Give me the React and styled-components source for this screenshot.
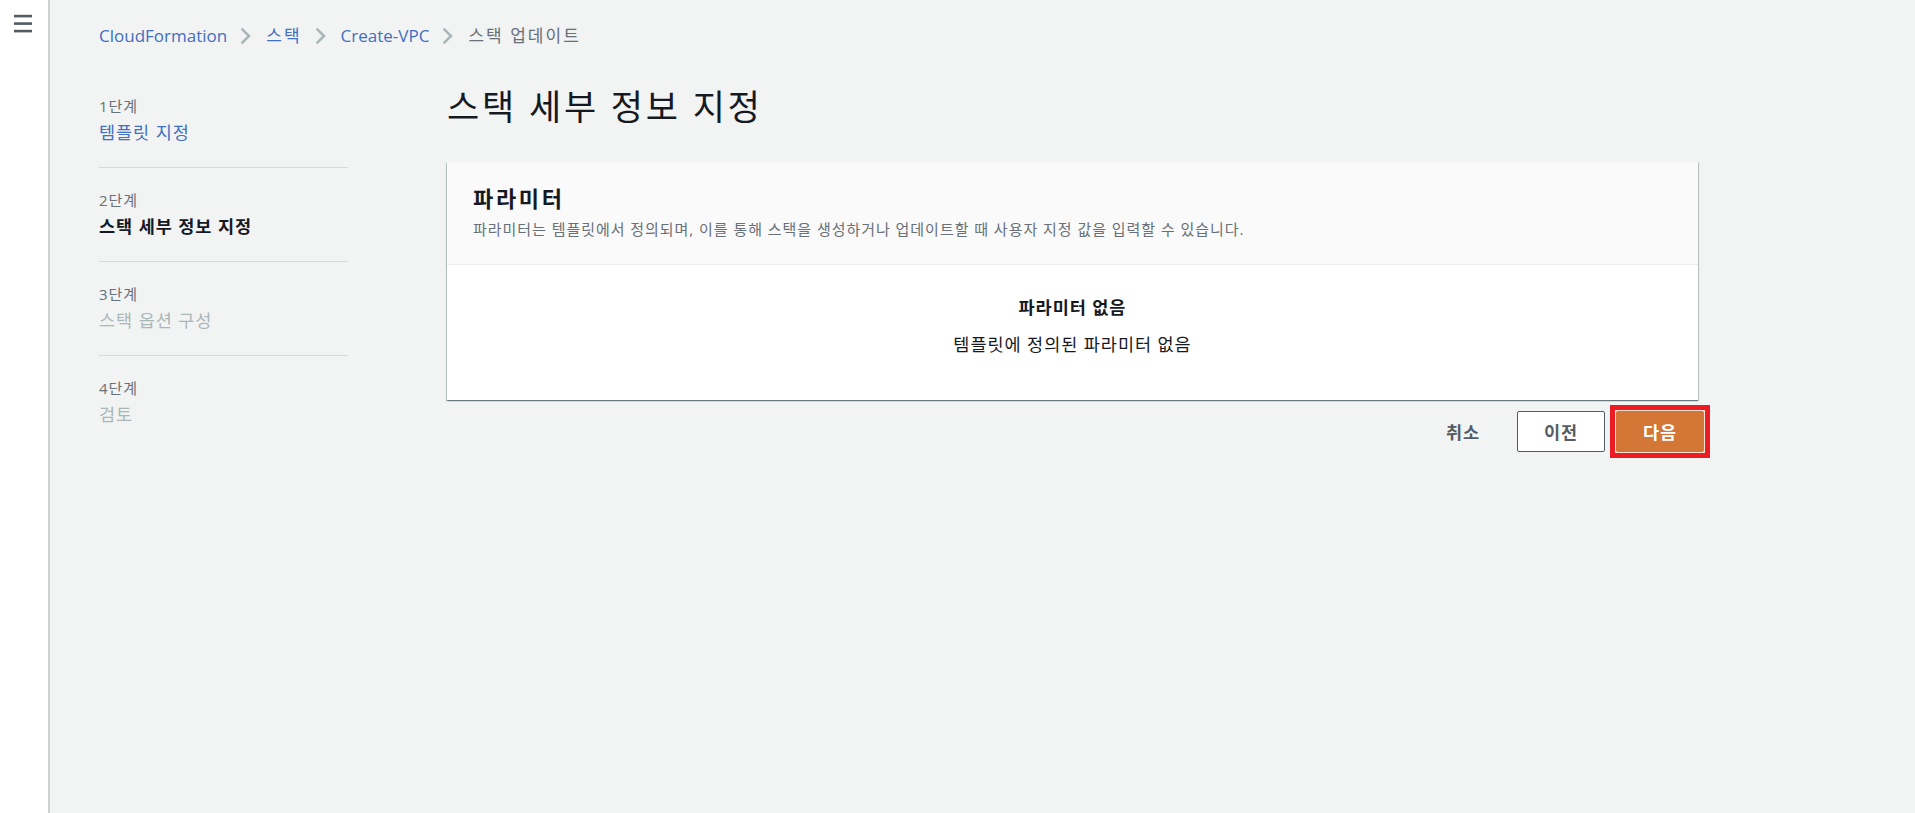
import styled, { createGlobalStyle } from "styled-components";

const GlobalStyle = createGlobalStyle`
  html, body {
    margin: 0;
    padding: 0;
    background: #f2f3f3;
    font-family: "Open Sans", "Noto Sans CJK KR", sans-serif;
    color: #16191f;
    letter-spacing: 0.06em;
  }
  * {
    box-sizing: border-box;
  }
`;

const steps = [
  { label: "1단계", title: "템플릿 지정", state: "link" },
  { label: "2단계", title: "스택 세부 정보 지정", state: "active" },
  { label: "3단계", title: "스택 옵션 구성", state: "disabled" },
  { label: "4단계", title: "검토", state: "disabled" },
];

const crumbs = [
  { text: "CloudFormation", link: true, latin: true },
  { text: "스택", link: true },
  { text: "Create-VPC", link: true, latin: true },
  { text: "스택 업데이트", link: false },
];

function MenuIcon() {
  return (
    <svg width="18" height="19" viewBox="0 0 18 19">
      <rect x="0" y="0.8" width="18" height="2.6" fill="#545b64" />
      <rect x="0" y="8.3" width="18" height="2.6" fill="#545b64" />
      <rect x="0" y="15.8" width="18" height="2.6" fill="#545b64" />
    </svg>
  );
}

function Chevron() {
  return (
    <ChevronWrap>
      <svg width="11" height="18" viewBox="0 0 11 18">
        <polyline
          points="1.6,1.6 9,9 1.6,16.4"
          fill="none"
          stroke="#aab7b8"
          strokeWidth="2.6"
        />
      </svg>
    </ChevronWrap>
  );
}

export default function App() {
  return (
    <>
      <GlobalStyle />
      <Page>
        <Sidebar>
          <MenuIcon />
        </Sidebar>
        <Main>
          <Breadcrumbs>
            {crumbs.map((c, i) => (
              <Crumb key={c.text}>
                {i > 0 && <Chevron />}
                <CrumbText $link={c.link} $latin={c.latin}>
                  {c.text}
                </CrumbText>
              </Crumb>
            ))}
          </Breadcrumbs>
          <Row>
            <StepNav>
              {steps.map((s) => (
                <Step key={s.label}>
                  <StepLabel>{s.label}</StepLabel>
                  <StepTitle $state={s.state}>{s.title}</StepTitle>
                </Step>
              ))}
            </StepNav>
            <Content>
              <Heading>스택 세부 정보 지정</Heading>
              <Card>
                <CardHeader>
                  <CardTitle>파라미터</CardTitle>
                  <CardDescription>
                    파라미터는 템플릿에서 정의되며, 이를 통해 스택을 생성하거나
                    업데이트할 때 사용자 지정 값을 입력할 수 있습니다.
                  </CardDescription>
                </CardHeader>
                <CardBody>
                  <EmptyTitle>파라미터 없음</EmptyTitle>
                  <EmptyText>템플릿에 정의된 파라미터 없음</EmptyText>
                </CardBody>
              </Card>
              <Actions>
                <TextButton>취소</TextButton>
                <Button>이전</Button>
                <Highlight>
                  <Button $primary>다음</Button>
                </Highlight>
              </Actions>
            </Content>
          </Row>
        </Main>
      </Page>
    </>
  );
}

const Page = styled.div`
  display: flex;
  min-height: 100vh;
`;

const Sidebar = styled.aside`
  width: 50px;
  flex-shrink: 0;
  display: flex;
  justify-content: center;
  padding-top: 14px;
  padding-right: 2px;
  background: #ffffff;
  border-right: 2px solid #cdd1d1;
`;

const Main = styled.main`
  flex: 1;
  padding-left: 49px;
`;

const Breadcrumbs = styled.nav`
  display: flex;
  align-items: center;
  height: 72px;
  font-size: 17px;
`;

const Crumb = styled.span`
  display: flex;
  align-items: center;
`;

const ChevronWrap = styled.span`
  display: flex;
  margin: 0 15px 0 13px;
`;

const CrumbText = styled.span`
  color: ${(p) => (p.$link ? "#416fc1" : "#687078")};
  line-height: 24px;
  letter-spacing: ${(p) => (p.$latin ? "0" : "0.12em")};
`;

const Row = styled.div`
  display: flex;
  gap: 99px;
  align-items: flex-start;
  padding-top: 2px;
`;

const StepNav = styled.ol`
  width: 249px;
  flex-shrink: 0;
  margin: 0;
  padding: 0;
  list-style: none;
`;

const Step = styled.li`
  padding: 21px 0 20px;
  border-bottom: 1px solid #d5dbdb;

  &:last-child {
    border-bottom: none;
  }
`;

const StepLabel = styled.div`
  font-size: 15px;
  line-height: 22px;
  color: #687078;
`;

const stepColors = {
  link: "#416fc1",
  active: "#16191f",
  disabled: "#aab7b8",
};

const StepTitle = styled.div`
  font-size: 17.5px;
  line-height: 30px;
  color: ${(p) => stepColors[p.$state]};
  font-weight: ${(p) => (p.$state === "active" ? 700 : 400)};
`;

const Content = styled.section`
  width: 1251px;
`;

const Heading = styled.h1`
  margin: 12px 0 34px;
  font-size: 35px;
  line-height: 42px;
  font-weight: 400;
  letter-spacing: 0.08em;
  color: #16191f;
`;

const Card = styled.div`
  background: #ffffff;
  box-shadow: 0 1px 1px 0 rgba(0, 28, 36, 0.35),
    1px 1px 1px 0 rgba(0, 28, 36, 0.18), -1px 1px 1px 0 rgba(0, 28, 36, 0.18);
`;

const CardHeader = styled.header`
  background: #fafafa;
  border-bottom: 1px solid #eaeded;
  padding: 21px 26px 24px;
`;

const CardTitle = styled.h2`
  margin: 0;
  font-size: 22px;
  line-height: 30px;
  font-weight: 700;
  letter-spacing: 0.12em;
  color: #16191f;
`;

const CardDescription = styled.p`
  margin: 5px 0 0;
  font-size: 15px;
  line-height: 22px;
  color: #687078;
`;

const CardBody = styled.div`
  padding: 29px 26px 43px;
  text-align: center;
`;

const EmptyTitle = styled.div`
  font-size: 17.5px;
  line-height: 26px;
  font-weight: 700;
  color: #16191f;
`;

const EmptyText = styled.div`
  margin-top: 11px;
  font-size: 17.5px;
  line-height: 26px;
  color: #16191f;
`;

const Actions = styled.div`
  display: flex;
  justify-content: flex-end;
  align-items: center;
  gap: 5px;
  margin: 5px -12px 0 0;
`;

const TextButton = styled.button`
  height: 41px;
  padding: 0 20px;
  margin-right: 12px;
  border: none;
  background: transparent;
  font-family: inherit;
  font-size: 17.5px;
  font-weight: 700;
  letter-spacing: inherit;
  color: #545b64;
`;

const Highlight = styled.span`
  display: flex;
  padding: 1px;
  border: 5px solid #ed1c24;
  background: #f6e2d4;
`;

const Button = styled.button`
  height: 41px;
  width: 88px;
  padding: 0;
  border-radius: 2px;
  font-family: inherit;
  font-size: 17.5px;
  font-weight: 700;
  letter-spacing: inherit;
  border: 1px solid ${(p) => (p.$primary ? "#d37636" : "#545b64")};
  background: ${(p) => (p.$primary ? "#d37636" : "#ffffff")};
  color: ${(p) => (p.$primary ? "#ffffff" : "#545b64")};
`;
